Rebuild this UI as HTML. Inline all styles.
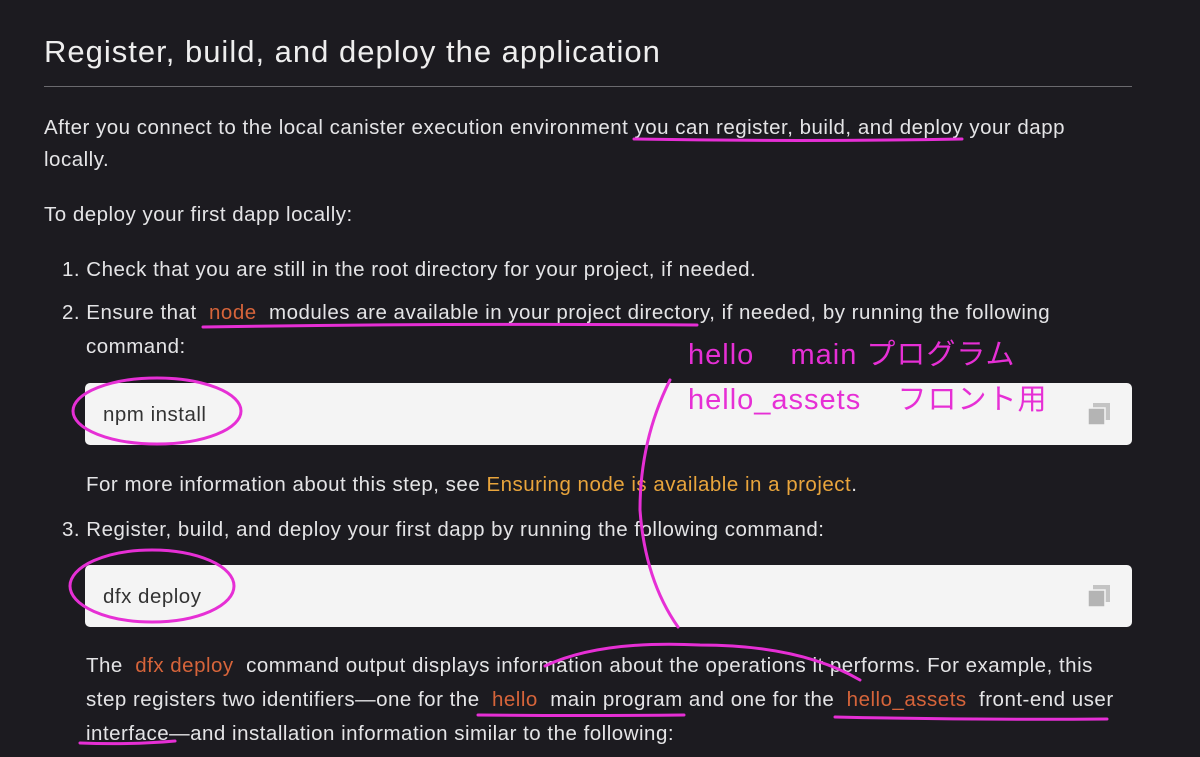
<!DOCTYPE html>
<html><head><meta charset="utf-8"><style>
html,body{margin:0;padding:0;background:#1c1b20;width:1200px;height:757px;overflow:hidden}
body{font-family:"Liberation Sans","Noto Sans CJK JP",sans-serif;color:#e4e4e6;position:relative}
.l{position:absolute;white-space:nowrap;font-size:20.5px;letter-spacing:0.5px;line-height:24px}
.o{color:#d6643a}
.y{color:#e9a53c}
h1{position:absolute;left:44px;top:34px;margin:0;font-weight:normal;font-size:31px;letter-spacing:1px;color:#eee;white-space:nowrap}
.hr{position:absolute;left:44px;top:86px;width:1088px;height:1px;background:#6a6a6e}
.box{position:absolute;left:85px;width:1047px;height:62px;background:#f4f4f4;border-radius:5px}
.box span{position:absolute;left:18px;top:20px;font-size:20.5px;letter-spacing:0.5px;color:#333}
.cp{position:absolute;right:20px;top:18px;width:26px;height:26px}
.pk{position:absolute;color:#e62fd5;font-size:29px;letter-spacing:1px;white-space:nowrap;line-height:30px}
</style></head><body>
<h1>Register, build, and deploy the application</h1>
<div class="hr"></div>
<div class="l" style="left:44px;top:116px">After you connect to the local canister execution environment you can register, build, and deploy your dapp</div>
<div class="l" style="left:44px;top:148px">locally.</div>
<div class="l" style="left:44px;top:203px">To deploy your first dapp locally:</div>
<div class="l" style="left:62px;top:258px">1. Check that you are still in the root directory for your project, if needed.</div>
<div class="l" style="left:62px;top:301px">2. Ensure that &nbsp;<span class="o">node</span>&nbsp; modules are available in your project directory, if needed, by running the following</div>
<div class="l" style="left:86px;top:335px">command:</div>
<div class="box" style="top:383px"><span>npm install</span><svg class="cp" viewBox="0 0 26 26"><rect x="7" y="2" width="17" height="17" fill="#c4c4c4"/><rect x="2" y="7" width="17" height="17" fill="#b4b4b4" stroke="#f4f4f4" stroke-width="1.5"/></svg></div>
<div class="l" style="left:86px;top:473px">For more information about this step, see <span class="y">Ensuring node is available in a project</span>.</div>
<div class="l" style="left:62px;top:518px">3. Register, build, and deploy your first dapp by running the following command:</div>
<div class="box" style="top:565px"><span>dfx deploy</span><svg class="cp" viewBox="0 0 26 26"><rect x="7" y="2" width="17" height="17" fill="#c4c4c4"/><rect x="2" y="7" width="17" height="17" fill="#b4b4b4" stroke="#f4f4f4" stroke-width="1.5"/></svg></div>
<div class="l" style="left:86px;top:654px">The &nbsp;<span class="o">dfx deploy</span>&nbsp; command output displays information about the operations it performs. For example, this</div>
<div class="l" style="left:86px;top:688px">step registers two identifiers—one for the &nbsp;<span class="o">hello</span>&nbsp; main program and one for the &nbsp;<span class="o">hello_assets</span>&nbsp; front-end user</div>
<div class="l" style="left:86px;top:722px">interface—and installation information similar to the following:</div>
<div class="pk" style="left:688px;top:340px">hello&nbsp;&nbsp;&nbsp; main プログラム</div>
<div class="pk" style="left:688px;top:385px">hello_assets&nbsp;&nbsp;&nbsp; フロント用</div>
<svg style="position:absolute;left:0;top:0" width="1200" height="757" fill="none" stroke="#e62fd5" stroke-width="3" stroke-linecap="round">
<path d="M634 139 Q800 142 962 139"/>
<path d="M203 327 Q450 323 697 325"/>
<ellipse cx="157" cy="411" rx="84" ry="33"/>
<ellipse cx="152" cy="586" rx="82" ry="36"/>
<path d="M670 380 Q640 440 640 510 Q645 580 678 627"/>
<path d="M545 666 Q600 640 700 645 Q800 645 860 680"/>
<path d="M478 715 Q580 716 684 715"/>
<path d="M835 717 Q970 720 1107 719"/>
<path d="M80 743 Q130 745 175 741"/>
</svg>
</body></html>
